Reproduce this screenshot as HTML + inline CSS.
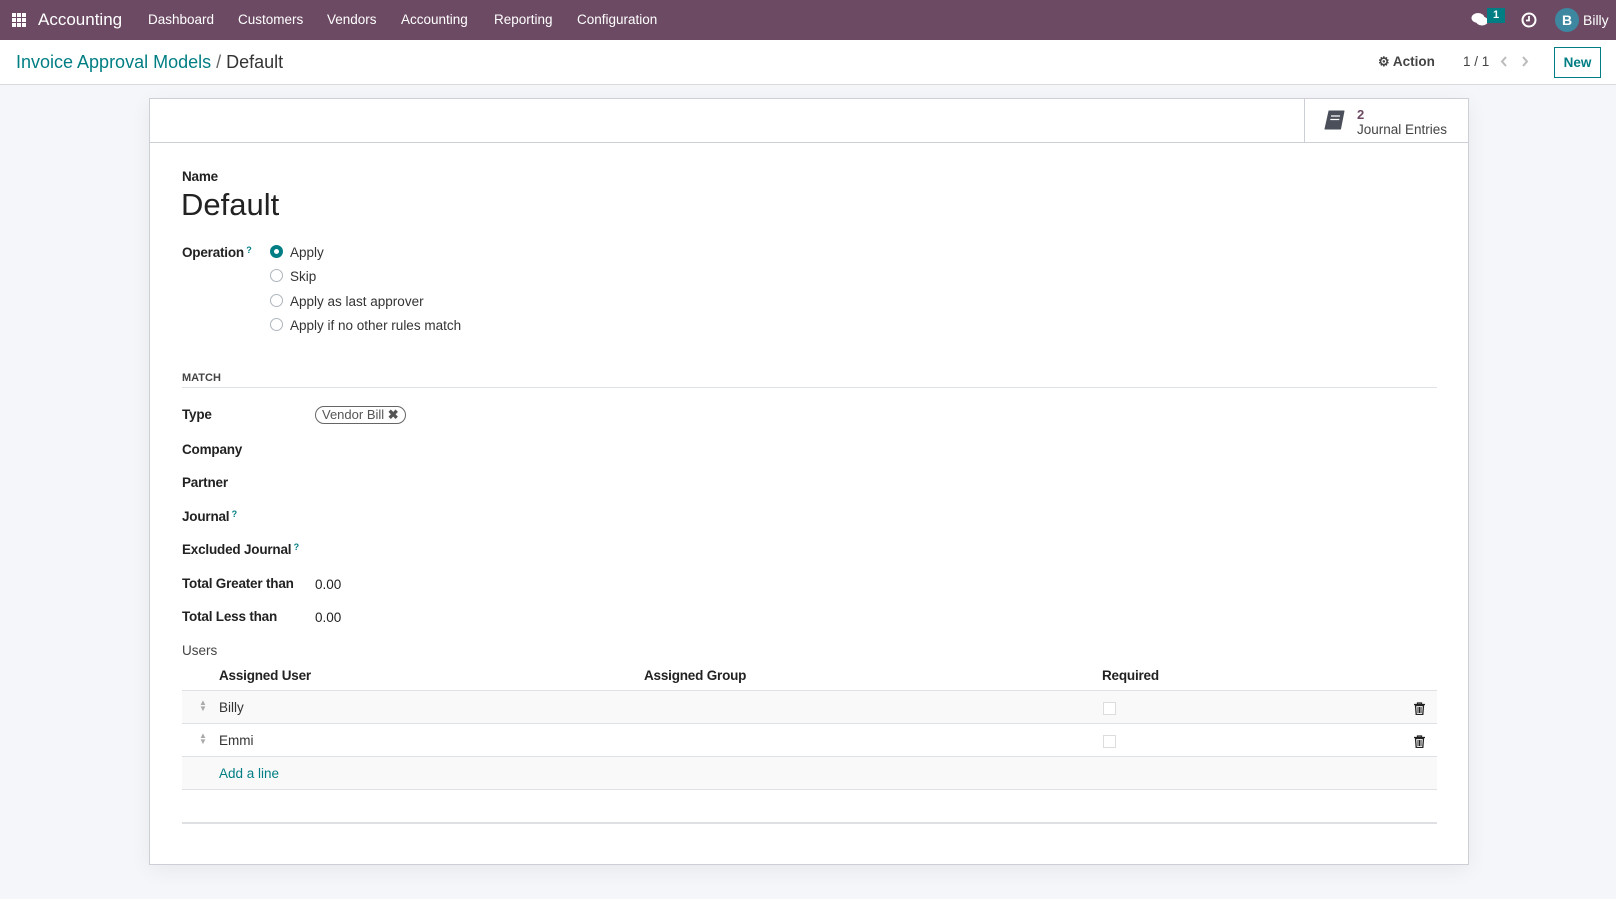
<!DOCTYPE html>
<html><head><meta charset="utf-8"><style>
*{box-sizing:border-box;margin:0;padding:0}
body{width:1616px;height:899px;overflow:hidden;background:#f5f6f9;font-family:"Liberation Sans",sans-serif;font-size:13.5px;color:#222;position:relative}
.a{position:absolute;white-space:nowrap}
.nav{position:absolute;left:0;top:0;width:1616px;height:40px;background:#6c4a63}
.nav .a{color:#fff;top:12px;font-size:13.5px}
.cp{position:absolute;left:0;top:40px;width:1616px;height:45px;background:#fff;border-bottom:1px solid #d8dadd}
.sheet{position:absolute;left:149px;top:98px;width:1320px;height:767px;background:#fff;border:1px solid #ccd0d6;box-shadow:0 5px 20px rgba(0,0,0,.06)}
.lbl{font-weight:bold;color:#222;letter-spacing:-0.2px}
.radio{position:absolute;width:13px;height:13px;border:1px solid #adb5bd;border-radius:50%;background:#fff}
.q{color:#017e84;font-size:9px;vertical-align:top;font-weight:bold}
.hl{position:absolute;height:1px;background:#dee2e6}
</style></head><body>
<div class="nav">
 <svg class="a" style="left:12px;top:13px" width="14" height="14"><g fill="#fff"><rect x="0" y="0" width="4" height="4"/><rect x="5" y="0" width="4" height="4"/><rect x="10" y="0" width="4" height="4"/><rect x="0" y="5" width="4" height="4"/><rect x="5" y="5" width="4" height="4"/><rect x="10" y="5" width="4" height="4"/><rect x="0" y="10" width="4" height="4"/><rect x="5" y="10" width="4" height="4"/><rect x="10" y="10" width="4" height="4"/></g></svg>
 <div class="a" style="left:38px;top:10px;font-size:17px">Accounting</div>
 <div class="a" style="left:148px">Dashboard</div>
 <div class="a" style="left:238px">Customers</div>
 <div class="a" style="left:327px">Vendors</div>
 <div class="a" style="left:401px">Accounting</div>
 <div class="a" style="left:494px">Reporting</div>
 <div class="a" style="left:577px">Configuration</div>
 <svg class="a" style="left:1471px;top:12px" width="18" height="15"><ellipse cx="7" cy="6" rx="6.5" ry="5" fill="#fff"/><ellipse cx="11" cy="9" rx="6" ry="4.5" fill="#fff"/></svg>
 <div class="a" style="left:1487px;top:8px;width:18px;height:15px;background:#017e84;font-size:11px;font-weight:bold;text-align:center;line-height:15px">1</div>
 <svg class="a" style="left:1521px;top:12px" width="16" height="16"><circle cx="8" cy="8" r="6.5" fill="none" stroke="#fff" stroke-width="2"/><path d="M8 4v4.5H5" stroke="#fff" stroke-width="1.8" fill="none"/></svg>
 <div class="a" style="left:1555px;top:8px;width:24px;height:24px;border-radius:50%;background:#3d88a0;text-align:center;line-height:24px;font-weight:bold;font-size:14px">B</div>
 <div class="a" style="left:1583px;top:12px;font-size:14px">Billy</div>
</div>
<div class="cp">
 <div class="a" style="left:16px;top:12px;font-size:18px;color:#017e84">Invoice Approval Models <span style="color:#666">/</span> <span style="color:#333">Default</span></div>
 <div class="a" style="left:1378px;top:14px;font-size:13.5px;color:#444;font-weight:bold"><span style="font-size:13px">&#9881;</span> Action</div>
 <div class="a" style="left:1463px;top:14px;color:#444">1 / 1</div>
 <svg class="a" style="left:1499px;top:15px" width="10" height="13"><path d="M7 2L3 6.5 7 11" stroke="#bbb" stroke-width="2" fill="none"/></svg>
 <svg class="a" style="left:1520px;top:15px" width="10" height="13"><path d="M3 2l4 4.5L3 11" stroke="#bbb" stroke-width="2" fill="none"/></svg>
 <div class="a" style="left:1554px;top:7px;width:47px;height:31px;border:1px solid #017e84;color:#017e84;text-align:center;line-height:29px;font-weight:bold;font-size:13.5px">New</div>
</div>
<div class="sheet">
 <div class="hl" style="left:0;top:43px;width:1318px;background:#ccd0d6"></div>
 <div class="a" style="left:1154px;top:0;width:1px;height:43px;background:#ccd0d6"></div>
 <svg class="a" style="left:1173px;top:11px" width="22" height="21"><path d="M6 1h15l-3.5 18H2z" fill="#4a4f5a" stroke="#4a4f5a" stroke-linejoin="round"/><path d="M8 6h9M7.3 9.5h9" stroke="#fff" stroke-width="1.3"/></svg>
 <div class="a" style="left:1207px;top:8px;color:#6c4a63;font-size:13px;font-weight:bold">2</div>
 <div class="a" style="left:1207px;top:23px;color:#444;font-size:13.5px">Journal Entries</div>

 <div class="a lbl" style="left:32px;top:70px">Name</div>
 <div class="a" style="left:31px;top:88px;font-size:31px;color:#222">Default</div>
 <div class="a lbl" style="left:32px;top:146px">Operation<span class="q"> ?</span></div>
 <div class="radio" style="left:120px;top:146px;border:4px solid #017e84"></div>
 <div class="a" style="left:140px;top:146px;color:#333">Apply</div>
 <div class="radio" style="left:120px;top:170px"></div>
 <div class="a" style="left:140px;top:170px;color:#333">Skip</div>
 <div class="radio" style="left:120px;top:195px"></div>
 <div class="a" style="left:140px;top:195px;color:#333">Apply as last approver</div>
 <div class="radio" style="left:120px;top:219px"></div>
 <div class="a" style="left:140px;top:219px;color:#333">Apply if no other rules match</div>

 <div class="a" style="left:32px;top:273px;font-size:11px;font-weight:bold;color:#444">MATCH</div>
 <div class="hl" style="left:32px;top:288px;width:1255px"></div>
 <div class="a lbl" style="left:32px;top:308px">Type</div>
 <div class="a" style="left:165px;top:307px;height:18px;padding:0 6px;border:1px solid #666;border-radius:9px;line-height:16px;color:#555;font-size:13px">Vendor Bill <b>&#10006;</b></div>
 <div class="a lbl" style="left:32px;top:343px">Company</div>
 <div class="a lbl" style="left:32px;top:376px">Partner</div>
 <div class="a lbl" style="left:32px;top:410px">Journal<span class="q"> ?</span></div>
 <div class="a lbl" style="left:32px;top:443px">Excluded Journal<span class="q"> ?</span></div>
 <div class="a lbl" style="left:32px;top:477px">Total Greater than</div>
 <div class="a" style="left:165px;top:478px">0.00</div>
 <div class="a lbl" style="left:32px;top:510px">Total Less than</div>
 <div class="a" style="left:165px;top:511px">0.00</div>
 <div class="a" style="left:32px;top:544px;color:#444">Users</div>

 <div class="a lbl" style="left:69px;top:569px">Assigned User</div>
 <div class="a lbl" style="left:494px;top:569px">Assigned Group</div>
 <div class="a lbl" style="left:952px;top:569px">Required</div>
 <div class="hl" style="left:32px;top:591px;width:1255px"></div>
 <div class="a" style="left:32px;top:592px;width:1255px;height:32px;background:#f9f9f9"></div>
 <div class="hl" style="left:32px;top:624px;width:1255px"></div>
 <div class="hl" style="left:32px;top:657px;width:1255px"></div>
 <div class="a" style="left:32px;top:658px;width:1255px;height:32px;background:#f9f9f9"></div>
 <div class="hl" style="left:32px;top:690px;width:1255px"></div>
 <div class="a" style="left:49px;top:601px;color:#aaa;font-size:8px;line-height:6px">&#9650;<br>&#9660;</div>
 <div class="a" style="left:69px;top:601px;color:#333">Billy</div>
 <div class="a" style="left:49px;top:634px;color:#aaa;font-size:8px;line-height:6px">&#9650;<br>&#9660;</div>
 <div class="a" style="left:69px;top:634px;color:#333">Emmi</div>
 <div class="a" style="left:69px;top:667px;color:#017e84">Add a line</div>
 <div class="a" style="left:953px;top:603px;width:13px;height:13px;border:1px solid #ddd;background:#fff"></div>
 <div class="a" style="left:953px;top:636px;width:13px;height:13px;border:1px solid #ddd;background:#fff"></div>
 <svg class="a" style="left:1264px;top:603px" width="11" height="13"><path d="M0 2.5h11M3.5 2.5V1h4v1.5M1.5 3.5h8l-.7 9H2.2z" stroke="#222" stroke-width="1.3" fill="none"/><path d="M4 5v6M5.5 5v6M7 5v6" stroke="#222"/></svg>
 <svg class="a" style="left:1264px;top:636px" width="11" height="13"><path d="M0 2.5h11M3.5 2.5V1h4v1.5M1.5 3.5h8l-.7 9H2.2z" stroke="#222" stroke-width="1.3" fill="none"/><path d="M4 5v6M5.5 5v6M7 5v6" stroke="#222"/></svg>
 <div class="hl" style="left:32px;top:723px;width:1255px;height:2px;background:#dfe0e4"></div>
</div>
</body></html>
